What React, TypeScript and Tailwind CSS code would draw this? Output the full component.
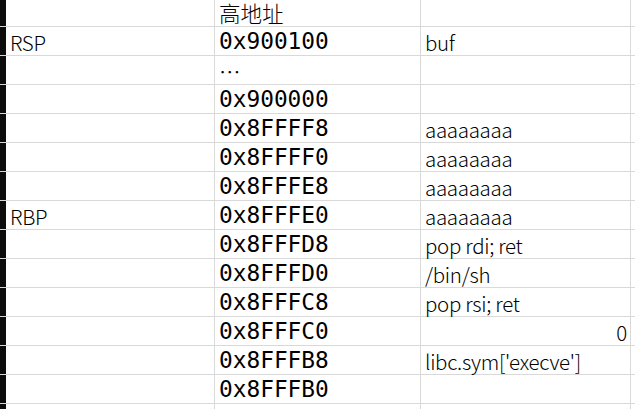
const rows: { a?: string; b?: string; c?: string; right?: boolean }[] = [
  { b: '高地址' },
  { a: 'RSP', b: '0x900100', c: 'buf' },
  { b: '…' },
  { b: '0x900000' },
  { b: '0x8FFFF8', c: 'aaaaaaaa' },
  { b: '0x8FFFF0', c: 'aaaaaaaa' },
  { b: '0x8FFFE8', c: 'aaaaaaaa' },
  { a: 'RBP', b: '0x8FFFE0', c: 'aaaaaaaa' },
  { b: '0x8FFFD8', c: 'pop rdi; ret' },
  { b: '0x8FFFD0', c: '/bin/sh' },
  { b: '0x8FFFC8', c: 'pop rsi; ret' },
  { b: '0x8FFFC0', c: '0', right: true },
  { b: '0x8FFFB8', c: "libc.sym['execve']" },
  { b: '0x8FFFB0' },
  {},
];

const sans = "font-['Noto_Sans_CJK_SC',sans-serif] font-light text-[20.5px] tracking-[-0.3px] leading-none pb-[3px] pl-[4px]";
const cjk = "font-['Noto_Sans_CJK_SC',sans-serif] font-light text-[21.5px] leading-none pb-[3px] pl-[4px]";
const mono = "font-['DejaVu_Sans_Mono',monospace] text-[22.8px] leading-none pb-[2px] pl-[4px]";

function Cell({ text, w, right }: { text?: string; w: string; right?: boolean }) {
  const isHex = !!text && text.startsWith('0x');
  const isCjk = !!text && /[\u4e00-\u9fff…]/.test(text);
  return (
    <div
      className={`${w} shrink-0 h-full flex items-end border-r border-[#d9d9d9] whitespace-nowrap text-black ${
        right ? 'justify-end pr-[3px]' : ''
      }`}
    >
      {text && <span className={isHex ? mono : isCjk ? cjk : sans}>{text}</span>}
    </div>
  );
}

export default function App() {
  return (
    <div className="w-[635px] h-[409px] bg-white overflow-hidden flex flex-col">
      {rows.map((r, i) => (
        <div
          key={i}
          className={`flex shrink-0 border-b border-[#d9d9d9] ${i === 0 ? 'h-[27px]' : 'h-[29px]'}`}
        >
          <div className="w-[6px] shrink-0 h-full bg-[#0c0c0c]" />
          <Cell w="w-[209px]" text={r.a} />
          <Cell w="w-[206px]" text={r.b} />
          <Cell w="w-[210px]" text={r.c} right={r.right} />
          <div className="flex-1" />
        </div>
      ))}
    </div>
  );
}
